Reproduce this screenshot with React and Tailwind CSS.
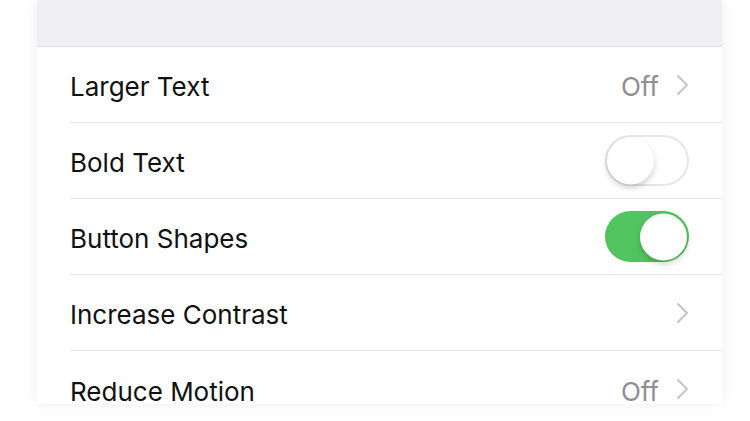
import React from 'react'

const font = { fontFamily: 'Inter, "Noto Sans", sans-serif' }

const Chevron = () => (
  <svg width="13" height="22" viewBox="0 0 13 22" fill="none" className="ml-[17px]">
    <path d="M2 2 L11 11 L2 20" stroke="#c4c4c9" strokeWidth="2" strokeLinecap="round" strokeLinejoin="round" />
  </svg>
)

const Toggle = ({ on }) => (
  <div
    className={`relative w-[84px] h-[51px] rounded-full ${
      on ? 'bg-[#52c45f]' : 'bg-white border-[2px] border-[#e6e6ea]'
    }`}
  >
    <div
      className={`absolute top-1/2 -translate-y-1/2 w-[47px] h-[47px] rounded-full bg-white shadow-[0_3px_6px_rgba(0,0,0,0.2)] ${
        on ? 'right-[2px]' : 'left-0'
      }`}
    />
  </div>
)

const Row = ({ label, value, chevron, toggle, last }) => (
  <div className="pl-[33px] h-[76px] shrink-0">
    <div className={`flex items-center h-full pr-[33px] ${last ? '' : 'border-b border-[#e6e6ea]'}`}>
      <span className="flex-1 text-[26px] text-[#111] pt-[4px]">{label}</span>
      {value && <span className="text-[26px] text-[#8e8e93] pt-[4px]">{value}</span>}
      {chevron && <Chevron />}
      {toggle !== undefined && <Toggle on={toggle} />}
    </div>
  </div>
)

export default function App() {
  return (
    <div className="w-[750px] h-[421px] bg-white overflow-hidden" style={font}>
      <div className="ml-[37px] w-[685px] h-[404px] bg-white overflow-hidden flex flex-col shadow-[0_0_14px_rgba(0,0,0,0.07)]">
        <div className="h-[47px] shrink-0 bg-[#efeff4] border-b border-[#e0e0e4]" />
        <Row label="Larger Text" value="Off" chevron />
        <Row label="Bold Text" toggle={false} />
        <Row label="Button Shapes" toggle={true} />
        <Row label="Increase Contrast" chevron />
        <Row label="Reduce Motion" value="Off" chevron last />
      </div>
    </div>
  )
}
